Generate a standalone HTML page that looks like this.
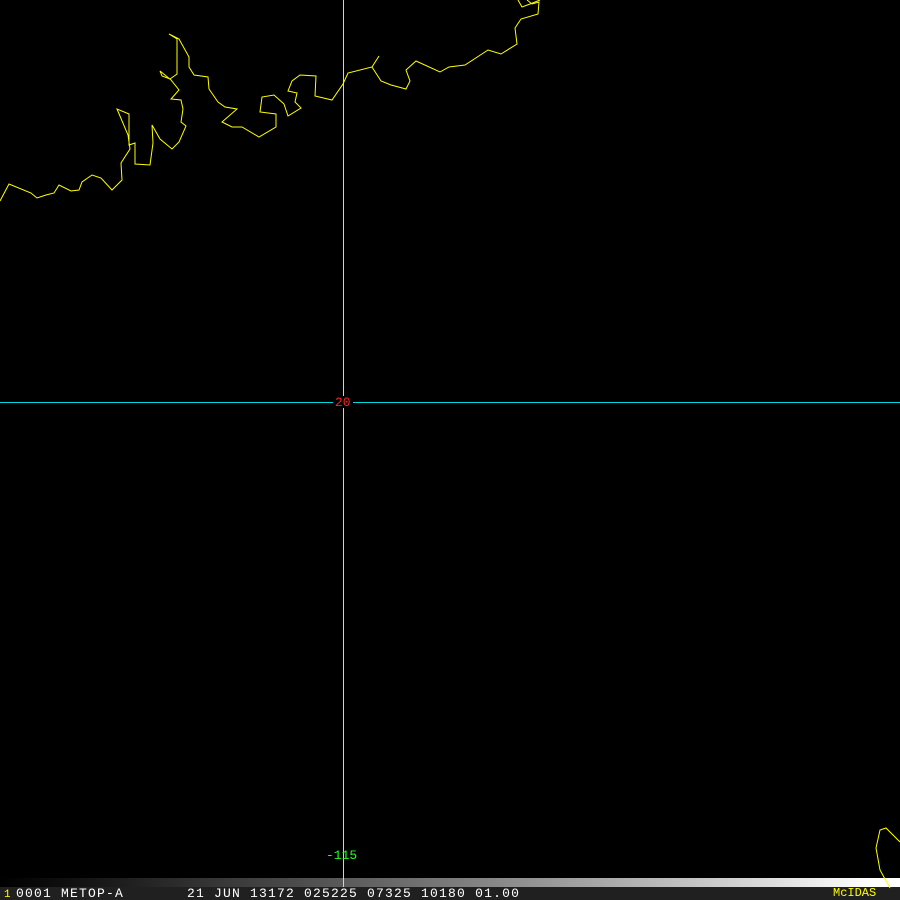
<!DOCTYPE html>
<html><head><meta charset="utf-8"><style>
html,body{margin:0;padding:0;background:#000;width:900px;height:900px;overflow:hidden;position:relative}
.t{position:absolute;font-family:"Liberation Mono",monospace;font-size:13px;line-height:13px;white-space:pre;letter-spacing:1.2px}
</style></head><body>
<div style="position:absolute;left:0;top:878px;width:900px;height:9px;background:linear-gradient(to right,#000 0%,#111 8%,#444 30%,#888 55%,#ccc 80%,#fff 97%)"></div>
<div style="position:absolute;left:0;top:887px;width:900px;height:13px;background:#202020"></div>
<svg width="900" height="900" style="position:absolute;left:0;top:0" shape-rendering="crispEdges">
<line x1="343.5" y1="0" x2="343.5" y2="887" stroke="#b8dcdc" stroke-width="1"/>
<line x1="0" y1="402.5" x2="900" y2="402.5" stroke="#00d8e0" stroke-width="1"/>
<g fill="none" stroke="#ffff00" stroke-width="1" shape-rendering="auto">
<polyline points="0,201 9,184 31,193 37,198 46,195 54,193 59,185 71,191 79,190 82,182 92,175 101,178 112,190 122,180 121,163 130,149 128,135 117,109 129,114 129,145 135,143 135,164 150,165 153,143 152,125 160,139 172,149 179,142 186,126 181,122 183,109 181,100 171,99 179,90 171,80 160,71 162,76 170,79 177,74 177,39 169,34 179,39 189,57 189,67 194,75 208,77 209,89 218,102 225,107 237,109 222,122 232,127 242,127 259,137 276,127 276,114 260,112 262,97 274,95 284,104 288,116 301,108 295,102 297,93 288,91 292,81 300,75 316,76 315,96 332,100 343,84 348,73 372,67 379,56 372,67 381,81 391,85 406,89 410,81 406,70 416,61 440,72 449,67 465,65 488,50 501,54 517,44 515,28 521,19 538,14 539,2 532,4 527,0"/>
<polyline points="518,0 522,7 530,4 540,0"/>
<polyline points="890,888 880,870 876,848 880,830 886,828 900,842"/>
</g>
</svg>
<div style="position:absolute;left:333px;top:396px;width:20px;height:12px;background:#000"></div>
<div class="t" style="left:335px;top:396px;color:#ff2020;font-size:13px;letter-spacing:0">20</div>
<div class="t" style="left:326px;top:849px;color:#20ff20;font-size:13px;letter-spacing:0">-115</div>
<div class="t" style="left:16px;top:887px;color:#fff">0001 METOP-A       21 JUN 13172 025225 07325 10180 01.00</div>
<div class="t" style="left:4px;top:889px;color:#ffff00;font-size:11px;letter-spacing:0">1</div>
<div class="t" style="left:833px;top:887px;color:#ffff00;font-size:12px;letter-spacing:0">McIDAS</div>
</body></html>
